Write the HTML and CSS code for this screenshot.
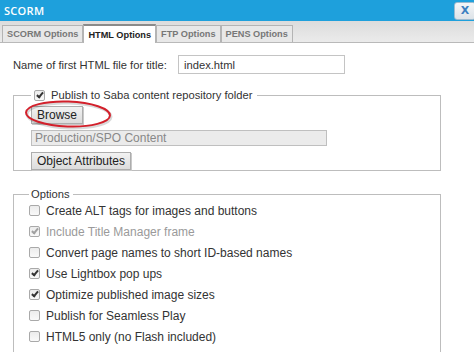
FILE: index.html
```html
<!DOCTYPE html>
<html lang="en">
<head>
    <meta charset="UTF-8">
    <title>SCORM</title>
    <link rel="stylesheet" href="styles.css">
</head>
<body>

    <div class="dialog">
        <div class="titlebar">
            <span class="title">SCORM</span>
            <button type="button" class="close">X</button>
        </div>

        <div class="tabs">
            <div class="tab">SCORM Options</div>
            <div class="tab active">HTML Options</div>
            <div class="tab">FTP Options</div>
            <div class="tab">PENS Options</div>
        </div>

        <div class="content">
            <div class="name-row">
                <label for="firstFile">Name of first HTML file for title:</label>
                <input type="text" id="firstFile" value="index.html">
            </div>

            <fieldset class="group publish">
                <legend><span class="box checked"></span>Publish to Saba content repository folder</legend>
                <div class="browse-wrap">
                    <button type="button" class="btn">Browse</button>
                    <!-- red highlight drawn over the Browse button -->
                    <svg class="circle" width="92" height="32" viewBox="0 0 92 32">
                        <ellipse cx="46" cy="16" rx="42" ry="12.5" fill="none" stroke="rgba(0,0,0,0.15)" stroke-width="3" transform="translate(1 1.5) rotate(2 46 16)"/>
                        <ellipse cx="46" cy="16" rx="42" ry="12.5" fill="none" stroke="#d3202b" stroke-width="2" transform="rotate(2 46 16)"/>
                    </svg>
                </div>
                <input type="text" class="path" value="Production/SPO Content" disabled>
                <div class="attr-row"><button type="button" class="btn">Object Attributes</button></div>
            </fieldset>

            <fieldset class="group options">
                <legend>Options</legend>
                <div class="opt"><span class="box"></span>Create ALT tags for images and buttons</div>
                <div class="opt disabled"><span class="box checked"></span>Include Title Manager frame</div>
                <div class="opt"><span class="box"></span>Convert page names to short ID-based names</div>
                <div class="opt"><span class="box checked"></span>Use Lightbox pop ups</div>
                <div class="opt"><span class="box checked"></span>Optimize published image sizes</div>
                <div class="opt"><span class="box"></span>Publish for Seamless Play</div>
                <div class="opt"><span class="box"></span>HTML5 only (no Flash included)</div>
            </fieldset>
        </div>
    </div>

</body>
</html>
```

FILE: styles.css
```css
body {
    margin: 0;
    font-family: "Liberation Sans", Arial, sans-serif;
    font-size: 11.2px;
    color: #333;
    background: #fff;
    width: 474px;
    height: 352px;
    overflow: hidden;
}

.titlebar {
    height: 21px;
    background-color: #1ea0dc;
    display: flex;
    align-items: center;
    justify-content: space-between;
    padding-left: 4px;
}

.title {
    color: #fff;
    font-family: "Open Sans", sans-serif;
    font-weight: 600;
    font-size: 11px;
    letter-spacing: 0.3px;
}

.close {
    width: 22px;
    height: 18px;
    margin-right: -2px;
    padding: 0;
    border: 1px solid #9bbbd0;
    border-radius: 3px;
    background: linear-gradient(#f4f6f8, #dde3e8);
    color: #3b7fc0;
    font-family: "DejaVu Sans", sans-serif;
    font-weight: 700;
    font-size: 11px;
}

.tabs {
    height: 21px;
    background: linear-gradient(#dcdcdc, #ebebeb);
    border-bottom: 1px solid #b9b9b9;
    display: flex;
    align-items: flex-end;
    padding-left: 2px;
}

.tab {
    height: 16px;
    line-height: 17px;
    padding: 0 4px;
    border: 1px solid #b4b4b4;
    border-bottom: none;
    background: #e8e8e8;
    color: #777;
    font-family: "Liberation Sans", Arial, sans-serif;
    font-weight: 700;
    font-size: 9.2px;
}

.tab.active {
    height: 17px;
    line-height: 19px;
    background: #fff;
    color: #222;
    border-top: 2px solid #8a8a8a;
    margin-bottom: -1px;
}

.content {
    padding: 12px 33px 0 13px;
}

.name-row {
    display: flex;
    align-items: center;
    height: 19px;
}

.name-row label {
    width: 165px;
}

.name-row input {
    width: 167px;
    height: 19px;
    box-sizing: border-box;
    border: 1px solid #c4c4c4;
    padding: 0 5px;
    font: inherit;
    color: #333;
}

.group {
    margin: 0;
    border: 1px solid #bdbdbd;
    border-radius: 0;
    padding: 0 0 0 17px;
}

.publish {
    margin-top: 15px;
    height: 82px;
    box-sizing: border-box;
    padding-top: 5px;
}

.publish legend {
    margin-left: 0;
    padding: 0 4px 0 3px;
    display: flex;
    align-items: center;
}

.box {
    display: inline-block;
    position: relative;
    width: 9px;
    height: 9px;
    margin-right: 6px;
    border: 1px solid #a9a9a9;
    border-radius: 2px;
    background: linear-gradient(#ececec, #f9f9f9);
    flex: none;
}

.box.checked::after {
    content: "";
    position: absolute;
    left: 3px;
    top: 0;
    width: 2px;
    height: 5px;
    border: solid #333;
    border-width: 0 2px 2px 0;
    transform: rotate(40deg);
}

.browse-wrap {
    position: relative;
    height: 18px;
    width: 52px;
}

.btn {
    height: 18px;
    padding: 0 5px;
    border: 1px solid #adadad;
    border-radius: 0;
    background: linear-gradient(#f2f2f2, #dcdcdc);
    font: inherit;
    font-size: 12px;
    color: #222;
    box-shadow: 1px 1px 0 #c9c9c9;
}

.circle {
    position: absolute;
    left: -9px;
    top: -8px;
}

.path {
    display: block;
    margin-top: 6px;
    width: 296px;
    height: 16px;
    box-sizing: border-box;
    border: 1px solid #bfbfbf;
    background: #ebebeb;
    padding: 0 3px;
    font: inherit;
    font-size: 12px;
    color: #888;
}

.attr-row {
    margin-top: 6px;
}

.options {
    margin-top: 17px;
    height: 166px;
    box-sizing: border-box;
    border-bottom: none;
    padding-left: 15px;
    padding-top: 0;
}

.options legend {
    margin-left: 0;
    padding: 0 3px 0 2px;
}

.opt {
    display: flex;
    align-items: center;
    height: 21px;
    font-size: 12px;
}

.opt.disabled {
    color: #9a9a9a;
}

.opt.disabled .box.checked::after {
    border-color: #a0a0a0;
}
```
